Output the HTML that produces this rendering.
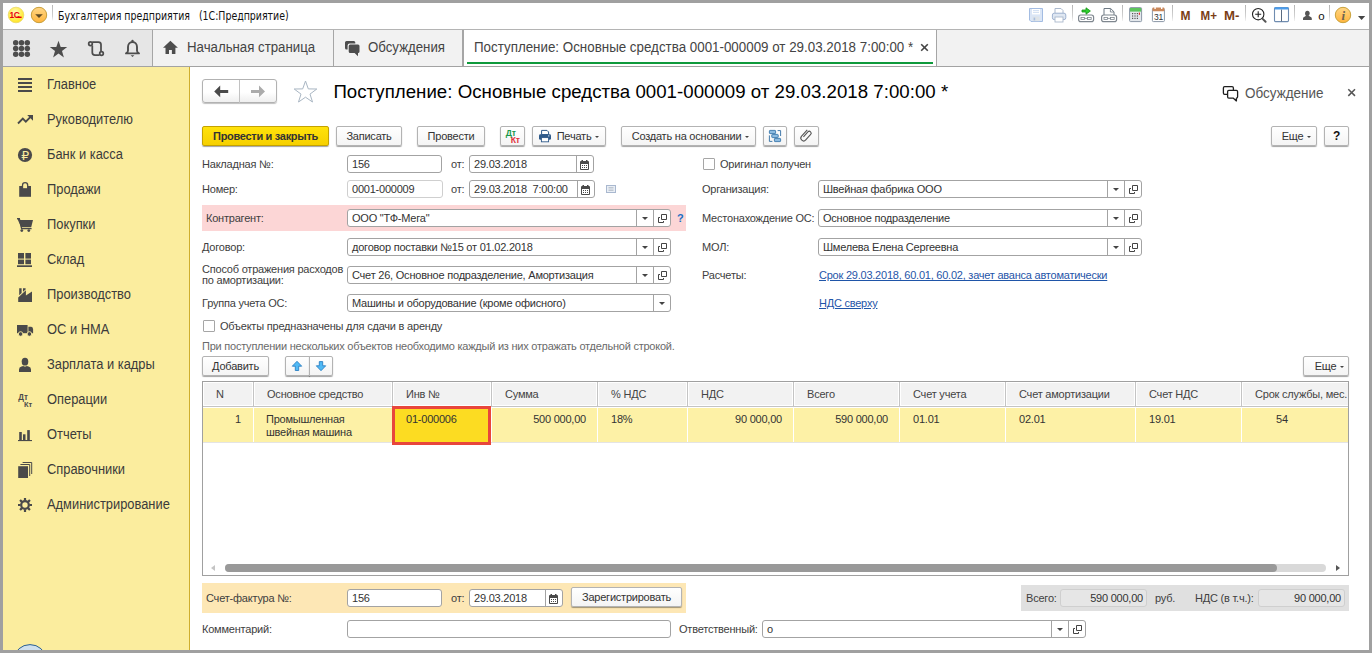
<!DOCTYPE html>
<html lang="ru">
<head>
<meta charset="utf-8">
<title>Бухгалтерия предприятия (1С:Предприятие)</title>
<style>
*{box-sizing:border-box;margin:0;padding:0}
html,body{width:1372px;height:653px;overflow:hidden;background:#a0a0a0}
body{position:relative;font-family:"Liberation Sans",sans-serif;font-size:11px;color:#333}
.a{position:absolute;white-space:pre}
svg{position:absolute;overflow:visible}
#win{left:3px;top:3px;width:1366px;height:647px;background:#fff;overflow:hidden}
#pg{left:-3px;top:-3px;width:1372px;height:653px}
/* title bar */
#ttl{left:58.4px;top:8px;height:16px;line-height:16px;font-family:"DejaVu Sans Condensed","DejaVu Sans",sans-serif;font-size:12px;color:#111;transform:scaleX(.872);transform-origin:0 50%}
.tsep{width:1px;top:5px;height:16px;background:linear-gradient(#b8b8b8,#d0d0d0 70%,#fff)}
.mtx{top:7px;height:16px;line-height:16px;font-size:13px;font-weight:bold;color:#7a3b12;letter-spacing:-0.5px}
/* tab bar */
#tabbar{left:3px;top:29px;width:1366px;height:38px;background:#f2f2f2;border-top:1px solid #b4b4b4;border-bottom:1px solid #a3a3a3}
#tools{left:3px;top:30px;width:149px;height:36px;background:#e6e6e6}
.tdiv{top:30px;height:36px;background:#a6a6a6}
.tabtx{top:30px;height:36px;line-height:35px;font-size:14px;color:#444;transform:scaleX(.946);transform-origin:0 50%}
#acttab{left:464px;top:30px;width:472px;height:36px;background:#fff}
#green{left:467px;top:62px;width:466px;height:2px;background:#0f9a3c}
/* sidebar */
#side{left:3px;top:67px;width:187px;height:583px;background:#fbed9e;border-right:1px solid #cfae2e}
.sit{left:47px;height:35px;line-height:35px;font-size:14px;color:#3b3b3b;transform:scaleX(.92);transform-origin:0 50%}
/* main */
#h1{left:333.4px;top:80px;height:24px;line-height:24px;font-size:18.67px;color:#000;letter-spacing:0.02px}
.btn{height:20px;border:1px solid #b3b3b3;border-radius:2px;background:linear-gradient(#fff,#f4f4f4);box-shadow:0 1px 1px rgba(0,0,0,.36);line-height:18px;text-align:center;font-size:11px;letter-spacing:-0.22px;color:#333}
.btn.y{background:linear-gradient(#ffe20a,#f6d000);border-color:#c4a200;font-weight:bold;letter-spacing:-0.3px}
.ar{display:inline-block;width:0;height:0;border-left:2.7px solid transparent;border-right:2.7px solid transparent;border-top:2.7px solid #444;margin-left:3.6px;vertical-align:middle;position:relative;top:0px}
.lb{height:18px;line-height:18px;font-size:11px;letter-spacing:-0.21px;color:#404040}
.inp{height:18px;border:1px solid #a3a3a3;border-radius:3px;background:#fff;line-height:16px;padding-left:4px;font-size:11px;letter-spacing:-0.22px;color:#333;overflow:hidden}
.inp.ro{border-color:#cfcfcf}
.seg{top:0;height:16px;width:1px;background:#a3a3a3}
.ddw{width:0;height:0;border-left:3px solid transparent;border-right:3px solid transparent;border-top:3px solid #444}
.cb{width:12px;height:12px;border:1px solid #a6a6a6;border-radius:1px;background:#fff}
.lnk{color:#1f55a8;text-decoration:underline;height:18px;line-height:18px;font-size:11px;letter-spacing:-0.23px}
.gray{color:#6a6a6a}
/* table */
#tbl{left:202px;top:381px;width:1147px;height:195px;border:1px solid #a0a0a0;background:#fff}
.th{top:383px;height:22px;background:#f2f2f2;line-height:23px;font-size:11px;letter-spacing:-0.21px;overflow:hidden;color:#444}
.td{top:408px;height:34px;background:#fdf1a6;line-height:13px;padding-top:5px;font-size:11px;letter-spacing:-0.22px;color:#333}
</style>
</head>
<body>
<div id="win" class="a"><div id="pg" class="a">
<div id="ttl" class="a">Бухгалтерия предприятия   (1С:Предприятие)</div>
<div class="a tsep" style="left:52px"></div>
<svg style="left:0;top:0" width="1372" height="653" viewBox="0 0 1372 653" font-family="Liberation Sans, sans-serif">
 <defs>
  <radialGradient id="g1c" cx="0.45" cy="0.35" r="0.7"><stop offset="0" stop-color="#fffbc0"/><stop offset="0.6" stop-color="#ffee50"/><stop offset="1" stop-color="#ffe11a"/></radialGradient>
  <linearGradient id="gsep" x1="0" y1="0" x2="0" y2="1"><stop offset="0" stop-color="#b4b4b4"/><stop offset="0.7" stop-color="#d2d2d2"/><stop offset="1" stop-color="#f4f4f4"/></linearGradient>
  <linearGradient id="gor" x1="0" y1="0" x2="0" y2="1"><stop offset="0" stop-color="#ffd686"/><stop offset="1" stop-color="#ffb53c"/></linearGradient>
 </defs>
 <!-- 1C logo -->
 <circle cx="16" cy="15" r="7.8" fill="url(#g1c)" stroke="#ead867" stroke-width="0.8"/>
 <text x="9.6" y="18" font-size="8.4" font-weight="bold" fill="#e8000c" letter-spacing="-0.6">1С</text>
 <rect x="16.4" y="16.6" width="5.2" height="1.4" fill="#e8000c"/>
 <!-- menu button -->
 <circle cx="39" cy="15" r="7.7" fill="url(#gor)" stroke="#c79e3a" stroke-width="1"/>
 <path d="M35.2 14.3 H42.8 L39 18 Z" fill="#5e4a24"/>
 <!-- separators -->
 <g fill="url(#gsep)">
  <rect x="1072" y="5" width="1" height="16"/>
  <rect x="1122" y="5" width="1" height="16"/>
  <rect x="1172" y="5" width="1" height="16"/>
  <rect x="1245" y="5" width="1" height="16"/>
  <rect x="1294" y="5" width="1" height="16"/>
  <rect x="1329" y="5" width="1" height="16"/>
 </g>
 <!-- save (disabled) -->
 <path d="M1029.5 8.5 H1042.5 V21.5 H1031 L1029.5 20 Z" fill="#dbe6f6" stroke="#a3bce2" stroke-width="1"/>
 <rect x="1032" y="9" width="8" height="5.4" fill="#fff"/>
 <path d="M1033 10.6 H1039 M1033 12.4 H1039" stroke="#c4d6ee" stroke-width="0.8"/>
 <rect x="1032.6" y="16.6" width="7" height="4.6" fill="#dfe4e8"/><rect x="1033.6" y="17.6" width="1.6" height="2.8" fill="#a8bfe0"/>
 <!-- print (disabled) -->
 <path d="M1055 8.5 H1061 L1063 10.5 V14 H1055 Z" fill="#fff" stroke="#aab8cc" stroke-width="1"/>
 <rect x="1052.4" y="13.2" width="13.4" height="6.4" rx="1.8" fill="#dfe7f2" stroke="#9fb2d0" stroke-width="1"/>
 <rect x="1055" y="17" width="8" height="5" fill="#fff" stroke="#aab8cc" stroke-width="0.9"/>
 <!-- link with green arrow -->
 <rect x="1078.6" y="15" width="15" height="6.6" rx="2.2" fill="#fff" stroke="#7f878f" stroke-width="1.2"/>
 <rect x="1081" y="17.4" width="3.6" height="2" fill="none" stroke="#7f878f" stroke-width="0.8"/><rect x="1087.6" y="17.4" width="3.6" height="2" fill="none" stroke="#7f878f" stroke-width="0.8"/>
 <path d="M1084.6 18.4 H1087.6" stroke="#7f878f" stroke-width="0.8"/>
 <path d="M1082 10 H1086 V7.8 L1090.4 11 L1086 14.2 V12 H1082 Z" fill="#2fd02f" stroke="#129212" stroke-width="0.8"/>
 <!-- doc over link -->
 <path d="M1104 8.5 H1110.6 L1114 11.8 V16 H1104 Z" fill="#fff" stroke="#6d7883" stroke-width="1"/>
 <path d="M1110.4 8.6 V12 H1113.8" fill="none" stroke="#6d7883" stroke-width="0.8"/>
 <rect x="1101.6" y="15" width="15" height="6.6" rx="2.2" fill="#fff" stroke="#7f878f" stroke-width="1.2"/>
 <rect x="1104" y="17.4" width="3.6" height="2" fill="none" stroke="#7f878f" stroke-width="0.8"/><rect x="1110.6" y="17.4" width="3.6" height="2" fill="none" stroke="#7f878f" stroke-width="0.8"/>
 <path d="M1107.6 18.4 H1110.6" stroke="#7f878f" stroke-width="0.8"/>
 <!-- calculator -->
 <rect x="1129.6" y="7.6" width="12" height="14" rx="1" fill="#e4e8ec" stroke="#8a97a6" stroke-width="1"/>
 <rect x="1130" y="8" width="11.2" height="3.6" fill="#5cc45c"/>
 <g fill="#555"><rect x="1132" y="13" width="1.2" height="1.2"/><rect x="1134.4" y="13" width="1.2" height="1.2"/><rect x="1136.8" y="13" width="1.2" height="1.2"/>
 <rect x="1132" y="15.4" width="1.2" height="1.2"/><rect x="1134.4" y="15.4" width="1.2" height="1.2"/><rect x="1136.8" y="15.4" width="1.2" height="1.2"/>
 <rect x="1132" y="17.8" width="1.2" height="1.2"/><rect x="1134.4" y="17.8" width="1.2" height="1.2"/><rect x="1136.8" y="17.8" width="1.2" height="1.2"/></g>
 <rect x="1138.8" y="12.6" width="1.2" height="2.2" fill="#e03030"/>
 <!-- calendar -->
 <rect x="1152.4" y="8.6" width="12" height="13" rx="1" fill="#fff" stroke="#8a97a6" stroke-width="1"/>
 <rect x="1152.4" y="7.6" width="12" height="3.6" rx="1" fill="#c9875a"/>
 <rect x="1154.4" y="6.6" width="1.4" height="2.4" fill="#fff"/><rect x="1161" y="6.6" width="1.4" height="2.4" fill="#fff"/>
 <text x="1158.4" y="19.8" font-size="8.5" fill="#333" text-anchor="middle" letter-spacing="-0.4">31</text>
 <!-- M M+ M- -->
 <g font-size="13" font-weight="bold" fill="#7a3d14">
  <text x="1180.6" y="20" textLength="10" lengthAdjust="spacingAndGlyphs">M</text>
  <text x="1200.6" y="20" textLength="16.4" lengthAdjust="spacingAndGlyphs">M+</text>
  <text x="1224" y="20" textLength="15.4" lengthAdjust="spacingAndGlyphs">M-</text>
 </g>
 <!-- zoom -->
 <circle cx="1258.2" cy="14.2" r="5.7" fill="#fff" stroke="#222" stroke-width="1.1"/>
 <path d="M1255.2 14.2 H1261.2 M1258.2 11.2 V17.2" stroke="#222" stroke-width="1.1"/>
 <path d="M1262.4 18.6 L1265.6 21.8" stroke="#555" stroke-width="2" stroke-linecap="round"/>
 <!-- panels -->
 <rect x="1274.5" y="7.6" width="14" height="14" rx="1" fill="#fff" stroke="#6f8cb0" stroke-width="1.1"/>
 <rect x="1274.5" y="7.2" width="14" height="2.4" rx="0.8" fill="#4a9cec"/>
 <path d="M1281.5 9.6 V21.4" stroke="#5a6b80" stroke-width="1"/>
 <!-- user -->
 <ellipse cx="1307.4" cy="13.4" rx="2.3" ry="2.6" fill="#555"/>
 <path d="M1303 20 V18.6 Q1303 17 1305 16.6 L1306.2 15.6 H1308.6 L1309.8 16.6 Q1311.8 17 1311.8 18.6 V20 Z" fill="#555"/>
 <text x="1318.2" y="20" font-size="11.5" fill="#111">о</text>
 <!-- info -->
 <circle cx="1343" cy="15" r="7.7" fill="url(#gor)" stroke="#c9a23c" stroke-width="1"/>
 <text x="1343.2" y="19.6" font-family="Liberation Serif, serif" font-size="13" font-weight="bold" font-style="italic" fill="#6e6350" text-anchor="middle">i</text>
 <path d="M1358 16 H1365.2 L1361.6 20 Z" fill="#444"/>
</svg>

<div id="tabbar" class="a"></div><div id="tools" class="a"></div>
<div class="a tdiv" style="left:152px;width:1px"></div>
<div class="a tabtx" style="left:187px">Начальная страница</div>
<div class="a tdiv" style="left:333px;width:1px"></div>
<div class="a tabtx" style="left:368px">Обсуждения</div>
<div class="a tdiv" style="left:462px;width:2px"></div>
<div id="acttab" class="a"></div>
<div class="a tabtx" style="left:473.6px;transform:scaleX(.954)">Поступление: Основные средства 0001-000009 от 29.03.2018 7:00:00 *</div>
<div id="green" class="a"></div>
<div class="a tdiv" style="left:936px;width:1px"></div>
<svg style="left:0;top:0" width="1372" height="653" viewBox="0 0 1372 653" font-family="Liberation Sans, sans-serif">
<g fill="#4d4d4d">
 <!-- grid of dots -->
 <circle cx="15.7" cy="42.7" r="2.75"/><circle cx="21.5" cy="42.7" r="2.75"/><circle cx="27.3" cy="42.7" r="2.75"/>
 <circle cx="15.7" cy="48.5" r="2.75"/><circle cx="21.5" cy="48.5" r="2.75"/><circle cx="27.3" cy="48.5" r="2.75"/>
 <circle cx="15.7" cy="54.3" r="2.75"/><circle cx="21.5" cy="54.3" r="2.75"/><circle cx="27.3" cy="54.3" r="2.75"/>
 <!-- star -->
 <path d="M58.5 40.8 L60.7 47 L67.2 47.1 L62 51.1 L63.9 57.4 L58.5 53.6 L53.1 57.4 L55 51.1 L49.8 47.1 L56.3 47 Z"/>
 <!-- home -->
 <path d="M170.4 40.8 L177.9 47.8 H175.4 V54 H171.9 V50 H169 V54 H165.5 V47.8 H163 Z"/>
 <!-- discussions (filled bubbles) -->
 <path d="M346.5 41 H353.8 Q355.3 41 355.3 42.5 V43.4 H349.6 Q347.6 43.4 347.6 45.4 V49.4 H346.5 Q345 49.4 345 47.9 V42.5 Q345 41 346.5 41 Z"/>
 <path d="M350.2 44.6 H358 Q359.5 44.6 359.5 46.1 V51.6 Q359.5 53.1 358 53.1 V56.2 L354.6 53.1 H350.2 Q348.7 53.1 348.7 51.6 V46.1 Q348.7 44.6 350.2 44.6 Z"/>
</g>
<g fill="none" stroke="#4d4d4d" stroke-width="1.75">
 <!-- history scroll -->
 <path d="M92.2 42 H98.4 Q101 42 101 44.6 V51.6"/>
 <path d="M92.3 45.6 V52.6 Q92.3 55.2 94.9 55.2 H99.6"/>
 <circle cx="90.5" cy="43.7" r="1.8"/><circle cx="101.5" cy="53.5" r="1.8"/>
 <!-- bell -->
 <path d="M126 53.4 Q128 52.6 128 50.4 V47 a4.5 5 0 0 1 9 0 V50.4 Q137 52.6 139 53.4 Z" stroke-width="1.9" stroke-linejoin="round"/>
</g>
<path d="M130.6 55.2 H134.4 L132.5 57.1 Z" fill="#4d4d4d"/>
<circle cx="132.5" cy="41" r="1.2" fill="#4d4d4d"/>
<!-- tab close -->
<path d="M921.2 44.2 L927.8 50.8 M927.8 44.2 L921.2 50.8" stroke="#444" stroke-width="1.6" fill="none"/>
</svg>

<div id="side" class="a"></div>
<div class="a sit" style="top:67px">Главное</div>
<div class="a sit" style="top:102px">Руководителю</div>
<div class="a sit" style="top:137px">Банк и касса</div>
<div class="a sit" style="top:172px">Продажи</div>
<div class="a sit" style="top:207px">Покупки</div>
<div class="a sit" style="top:242px">Склад</div>
<div class="a sit" style="top:277px">Производство</div>
<div class="a sit" style="top:312px">ОС и НМА</div>
<div class="a sit" style="top:347px">Зарплата и кадры</div>
<div class="a sit" style="top:382px">Операции</div>
<div class="a sit" style="top:417px">Отчеты</div>
<div class="a sit" style="top:452px">Справочники</div>
<div class="a sit" style="top:487px">Администрирование</div>
<svg style="left:0;top:0" width="1372" height="653" viewBox="0 0 1372 653" font-family="Liberation Sans, sans-serif">
<!-- ===== sidebar icons ===== -->
<g fill="#4a4a4a" stroke="none">
 <!-- Главное -->
 <rect x="18" y="78" width="14" height="2"/><rect x="18" y="82" width="14" height="2"/><rect x="18" y="86" width="14" height="2"/><rect x="18" y="90" width="14" height="2"/>
 <!-- Руководителю -->
 <path d="M18 123.5 L22.8 118.7 L25.8 121.7 L30.3 117.2" fill="none" stroke="#4a4a4a" stroke-width="1.9" stroke-linejoin="miter"/>
 <path d="M27.2 115 H33 V120.8 Z"/>
 <!-- Банк и касса -->
 <circle cx="25" cy="155" r="7.1"/>
 <!-- Продажи -->
 <path d="M19.2 186 H31 V196.8 H19.2 Z"/>
 <path d="M22.5 188.8 V185.2 a2.6 2.6 0 0 1 5.2 0 V188.8 Z" fill="#fbed9e" stroke="#4a4a4a" stroke-width="1.3"/>
 <!-- Покупки -->
 <path d="M17 218 H19.6 L20.2 220 H33 L31.2 227.2 H21.2 Z"/>
 <path d="M17 218.7 H19.3 L21.6 228.6 H31.6" fill="none" stroke="#4a4a4a" stroke-width="1.3"/>
 <circle cx="21.8" cy="230.6" r="1.4"/><circle cx="28.8" cy="230.6" r="1.4"/>
 <!-- Склад -->
 <rect x="18" y="253" width="6" height="5.6"/><rect x="25.4" y="253" width="5.6" height="5.6"/>
 <rect x="18" y="259.6" width="6" height="4.6"/><rect x="25.4" y="259.6" width="5.6" height="4.6"/>
 <rect x="17" y="265.3" width="15" height="1.7"/>
 <!-- Производство -->
 <path d="M18.2 302 V297.4 L25.9 290.2 V295.4 L32 291.6 V302 Z"/>
 <path d="M19.2 288.2 H21.6 V293 L19.2 295.2 Z"/><path d="M23 288.2 H25.6 V289.4 L23 291.8 Z"/>
 <!-- ОС и НМА -->
 <path d="M17 325 H27.6 V333.2 H17 Z"/>
 <path d="M28.4 326.8 H31.2 Q33.1 327.2 33.1 329.4 V333.2 H28.4 Z"/>
 <circle cx="20.6" cy="334" r="2.3" stroke="#fbed9e" stroke-width="0.9"/><circle cx="29.4" cy="334" r="2.3" stroke="#fbed9e" stroke-width="0.9"/>
 <!-- Зарплата и кадры -->
 <ellipse cx="25" cy="361.7" rx="3.3" ry="3.9"/>
 <path d="M19 372 V369.5 Q19 367.3 21.5 366.6 L23.2 366 Q25 367.2 26.8 366 L28.5 366.6 Q31 367.3 31 369.5 V372 Z"/>
 <!-- Отчеты -->
 <rect x="19.2" y="432" width="2.6" height="8.5"/><rect x="23" y="434.3" width="2.5" height="6.2"/><rect x="27.2" y="430.1" width="2.6" height="10.4"/>
 <rect x="18" y="440" width="14" height="1.1"/>
 <!-- Справочники -->
 <rect x="18.2" y="466.2" width="9.8" height="11.8"/>
 <path d="M20.4 464.5 H29.7 V476" fill="none" stroke="#4a4a4a" stroke-width="1"/>
 <path d="M22.6 462.5 H31.7 V474" fill="none" stroke="#4a4a4a" stroke-width="1"/>
 <!-- Администрирование -->
 <circle cx="25" cy="505" r="3.8" fill="none" stroke="#4a4a4a" stroke-width="2.2"/>
 <g stroke="#4a4a4a" stroke-width="2.2">
  <path d="M25 498 V500.6 M25 509.4 V512 M18 505 H20.6 M29.4 505 H32"/>
  <path d="M20.05 500.05 L21.9 501.9 M28.1 508.1 L29.95 509.95 M29.95 500.05 L28.1 501.9 M21.9 508.1 L20.05 509.95"/>
 </g>
</g>
<text x="25.2" y="159.8" font-family="DejaVu Sans, sans-serif" font-size="12.5" fill="#fbed9e" text-anchor="middle">₽</text>
<text x="18.2" y="400" font-size="8.8" font-weight="bold" fill="#4a4a4a" textLength="9.6" lengthAdjust="spacingAndGlyphs">Дт</text>
<text x="24" y="407" font-size="7.6" font-weight="bold" fill="#4a4a4a" textLength="8.2" lengthAdjust="spacingAndGlyphs">Кт</text>
<!-- windows start orb peeking -->
<ellipse cx="30" cy="658.6" rx="15.5" ry="14" fill="#cfe0ee" stroke="#2a5f8f" stroke-width="1"/>
</svg>

<div id="h1" class="a">Поступление: Основные средства 0001-000009 от 29.03.2018 7:00:00 *</div>
<div class="a lb" style="left:1245px;top:84px;font-size:14px;color:#555;letter-spacing:0;transform:scaleX(.962);transform-origin:0 50%">Обсуждение</div>
<div class="a btn y" style="left:202px;top:126px;width:127px;">Провести и закрыть</div>
<div class="a btn " style="left:336px;top:126px;width:66px;">Записать</div>
<div class="a btn " style="left:417px;top:126px;width:68px;">Провести</div>
<div class="a btn " style="left:500px;top:126px;width:25px;"></div>
<div class="a btn " style="left:532px;top:126px;width:74px;text-align:right;padding-right:6px">Печать<span class="ar"></span></div>
<div class="a btn " style="left:621px;top:126px;width:135px;text-align:right;padding-right:6px">Создать на основании<span class="ar"></span></div>
<div class="a btn " style="left:763px;top:126px;width:24px;"></div>
<div class="a btn " style="left:794px;top:126px;width:25px;"></div>
<div class="a btn " style="left:1271px;top:126px;width:46px;text-align:right;padding-right:5px">Еще<span class="ar"></span></div>
<div class="a btn " style="left:1324px;top:126px;width:25px;font-weight:bold;font-size:12px;color:#111">?</div>
<div class="a lb" style="left:202px;top:155px;">Накладная №:</div>
<div class="a inp" style="left:347px;top:155px;width:95px;">156</div>
<div class="a lb" style="left:451px;top:155px;">от:</div>
<div class="a inp" style="left:469px;top:155px;width:125px;">29.03.2018<div class="a seg" style="left:106px"></div><svg style="left:110px;top:4px" width="9" height="10" viewBox="0 0 9 10"><rect x="0" y="1" width="9" height="9" rx="1" fill="#4a4a4a"/><rect x="1" y="4" width="7" height="5" fill="#fff"/><rect x="1.5" y="0" width="1.5" height="2" fill="#4a4a4a"/><rect x="6" y="0" width="1.5" height="2" fill="#4a4a4a"/><g fill="#4a4a4a"><rect x="2" y="5" width="1" height="1"/><rect x="4" y="5" width="1" height="1"/><rect x="6" y="5" width="1" height="1"/><rect x="2" y="7" width="1" height="1"/><rect x="4" y="7" width="1" height="1"/><rect x="6" y="7" width="1" height="1"/></g></svg></div>
<div class="a lb" style="left:202px;top:180px;">Номер:</div>
<div class="a inp ro" style="left:347px;top:180px;width:96px;">0001-000009</div>
<div class="a lb" style="left:451px;top:180px;">от:</div>
<div class="a inp" style="left:469px;top:180px;width:126px;">29.03.2018  7:00:00<div class="a seg" style="left:107px"></div><svg style="left:111px;top:4px" width="9" height="10" viewBox="0 0 9 10"><rect x="0" y="1" width="9" height="9" rx="1" fill="#4a4a4a"/><rect x="1" y="4" width="7" height="5" fill="#fff"/><rect x="1.5" y="0" width="1.5" height="2" fill="#4a4a4a"/><rect x="6" y="0" width="1.5" height="2" fill="#4a4a4a"/><g fill="#4a4a4a"><rect x="2" y="5" width="1" height="1"/><rect x="4" y="5" width="1" height="1"/><rect x="6" y="5" width="1" height="1"/><rect x="2" y="7" width="1" height="1"/><rect x="4" y="7" width="1" height="1"/><rect x="6" y="7" width="1" height="1"/></g></svg></div>
<div class="a" style="left:202px;top:205px;width:484px;height:26px;background:#fcd6d6"></div>
<div class="a lb" style="left:206px;top:209px;">Контрагент:</div>
<div class="a inp" style="left:347px;top:209px;width:324px;">ООО "ТФ-Мега"<div class="a seg" style="left:305px"></div><svg style="left:310px;top:4px" width="9" height="9" viewBox="0 0 9 9"><path d="M3.5 0.5h5v5h-5z" fill="#fff" stroke="#444" stroke-width="1"/><path d="M2 3.5H0.5v5h5V7" fill="none" stroke="#444" stroke-width="1"/></svg><div class="a seg" style="left:288px"></div><div class="a ddw" style="left:294px;top:7px"></div></div>
<div class="a lb" style="left:677px;top:209px;font-weight:bold;color:#1a6fc4;letter-spacing:0">?</div>
<div class="a lb" style="left:202px;top:238px;">Договор:</div>
<div class="a inp" style="left:347px;top:238px;width:324px;">договор поставки №15 от 01.02.2018<div class="a seg" style="left:305px"></div><svg style="left:310px;top:4px" width="9" height="9" viewBox="0 0 9 9"><path d="M3.5 0.5h5v5h-5z" fill="#fff" stroke="#444" stroke-width="1"/><path d="M2 3.5H0.5v5h5V7" fill="none" stroke="#444" stroke-width="1"/></svg><div class="a seg" style="left:288px"></div><div class="a ddw" style="left:294px;top:7px"></div></div>
<div class="a lb" style="left:202px;top:262px;height:28px;line-height:11px;top:264px">Способ отражения расходов
по амортизации:</div>
<div class="a inp" style="left:347px;top:266px;width:324px;">Счет 26, Основное подразделение, Амортизация<div class="a seg" style="left:305px"></div><svg style="left:310px;top:4px" width="9" height="9" viewBox="0 0 9 9"><path d="M3.5 0.5h5v5h-5z" fill="#fff" stroke="#444" stroke-width="1"/><path d="M2 3.5H0.5v5h5V7" fill="none" stroke="#444" stroke-width="1"/></svg><div class="a seg" style="left:288px"></div><div class="a ddw" style="left:294px;top:7px"></div></div>
<div class="a lb" style="left:202px;top:294px;">Группа учета ОС:</div>
<div class="a inp" style="left:347px;top:294px;width:324px;">Машины и оборудование (кроме офисного)<div class="a seg" style="left:305px"></div><div class="a ddw" style="left:311px;top:7px"></div></div>
<div class="a cb" style="left:203px;top:320px"></div>
<div class="a lb" style="left:220px;top:317px;">Объекты предназначены для сдачи в аренду</div>
<div class="a lb gray" style="left:202px;top:337px;letter-spacing:-0.23px">При поступлении нескольких объектов необходимо каждый из них отражать отдельной строкой.</div>
<div class="a cb" style="left:703px;top:158px"></div>
<div class="a lb" style="left:720px;top:155px;">Оригинал получен</div>
<div class="a lb" style="left:702px;top:180px;">Организация:</div>
<div class="a inp" style="left:818px;top:180px;width:324px;">Швейная фабрика ООО<div class="a seg" style="left:305px"></div><svg style="left:310px;top:4px" width="9" height="9" viewBox="0 0 9 9"><path d="M3.5 0.5h5v5h-5z" fill="#fff" stroke="#444" stroke-width="1"/><path d="M2 3.5H0.5v5h5V7" fill="none" stroke="#444" stroke-width="1"/></svg><div class="a seg" style="left:288px"></div><div class="a ddw" style="left:294px;top:7px"></div></div>
<div class="a lb" style="left:702px;top:209px;">Местонахождение ОС:</div>
<div class="a inp" style="left:818px;top:209px;width:324px;">Основное подразделение<div class="a seg" style="left:305px"></div><svg style="left:310px;top:4px" width="9" height="9" viewBox="0 0 9 9"><path d="M3.5 0.5h5v5h-5z" fill="#fff" stroke="#444" stroke-width="1"/><path d="M2 3.5H0.5v5h5V7" fill="none" stroke="#444" stroke-width="1"/></svg><div class="a seg" style="left:288px"></div><div class="a ddw" style="left:294px;top:7px"></div></div>
<div class="a lb" style="left:702px;top:238px;">МОЛ:</div>
<div class="a inp" style="left:818px;top:238px;width:324px;">Шмелева Елена Сергеевна<div class="a seg" style="left:305px"></div><svg style="left:310px;top:4px" width="9" height="9" viewBox="0 0 9 9"><path d="M3.5 0.5h5v5h-5z" fill="#fff" stroke="#444" stroke-width="1"/><path d="M2 3.5H0.5v5h5V7" fill="none" stroke="#444" stroke-width="1"/></svg><div class="a seg" style="left:288px"></div><div class="a ddw" style="left:294px;top:7px"></div></div>
<div class="a lb" style="left:702px;top:266px;">Расчеты:</div>
<div class="a lnk" style="left:819px;top:266px;">Срок 29.03.2018, 60.01, 60.02, зачет аванса автоматически</div>
<div class="a lnk" style="left:819px;top:294px;">НДС сверху</div>
<div class="a btn " style="left:202px;top:356px;width:67px;">Добавить</div>
<div class="a btn " style="left:285px;top:356px;width:25px;border-radius:2px 0 0 2px"></div>
<div class="a btn " style="left:309px;top:356px;width:24px;border-radius:0 2px 2px 0"></div>
<div class="a btn " style="left:1303px;top:356px;width:46px;text-align:right;padding-right:4px">Еще<span class="ar"></span></div>
<div id="tbl" class="a"></div>
<div class="a th" style="left:204px;width:48px;padding-left:12px">N</div>
<div class="a" style="left:253px;top:382px;width:1px;height:24px;background:#c4c4c4"></div>
<div class="a th" style="left:255px;width:136px;padding-left:12px">Основное средство</div>
<div class="a" style="left:392px;top:382px;width:1px;height:24px;background:#c4c4c4"></div>
<div class="a th" style="left:394px;width:96px;padding-left:12px">Инв №</div>
<div class="a" style="left:491px;top:382px;width:1px;height:24px;background:#c4c4c4"></div>
<div class="a th" style="left:493px;width:103px;padding-left:12px">Сумма</div>
<div class="a" style="left:597px;top:382px;width:1px;height:24px;background:#c4c4c4"></div>
<div class="a th" style="left:599px;width:87px;padding-left:12px">% НДС</div>
<div class="a" style="left:687px;top:382px;width:1px;height:24px;background:#c4c4c4"></div>
<div class="a th" style="left:689px;width:103px;padding-left:12px">НДС</div>
<div class="a" style="left:793px;top:382px;width:1px;height:24px;background:#c4c4c4"></div>
<div class="a th" style="left:795px;width:103px;padding-left:12px">Всего</div>
<div class="a" style="left:899px;top:382px;width:1px;height:24px;background:#c4c4c4"></div>
<div class="a th" style="left:901px;width:103px;padding-left:12px">Счет учета</div>
<div class="a" style="left:1005px;top:382px;width:1px;height:24px;background:#c4c4c4"></div>
<div class="a th" style="left:1007px;width:127px;padding-left:12px">Счет амортизации</div>
<div class="a" style="left:1135px;top:382px;width:1px;height:24px;background:#c4c4c4"></div>
<div class="a th" style="left:1137px;width:103px;padding-left:12px">Счет НДС</div>
<div class="a" style="left:1241px;top:382px;width:1px;height:24px;background:#c4c4c4"></div>
<div class="a th" style="left:1243px;width:105px;padding-left:12px">Срок службы, мес.</div>
<div class="a" style="left:203px;top:406px;width:1145px;height:1px;background:#c4c4c4"></div>
<div class="a td" style="left:203px;width:50px;text-align:right;padding-right:12px;">1</div>
<div class="a td" style="left:254px;width:138px;padding-left:12px;">Промышленная
швейная машина</div>
<div class="a td" style="left:393px;width:98px;padding-left:13px;">01-000006</div>
<div class="a td" style="left:492px;width:105px;text-align:right;padding-right:11px;">500 000,00</div>
<div class="a td" style="left:598px;width:89px;padding-left:13px;">18%</div>
<div class="a td" style="left:688px;width:105px;text-align:right;padding-right:11px;">90 000,00</div>
<div class="a td" style="left:794px;width:105px;text-align:right;padding-right:11px;">590 000,00</div>
<div class="a td" style="left:900px;width:105px;padding-left:13px;">01.01</div>
<div class="a td" style="left:1006px;width:129px;padding-left:13px;">02.01</div>
<div class="a td" style="left:1136px;width:105px;padding-left:13px;">19.01</div>
<div class="a td" style="left:1242px;width:106px;padding-left:34px;">54</div>
<div class="a" style="left:203px;top:442px;width:1145px;height:1px;background:#e4e4e4"></div>
<div class="a" style="left:392px;top:406px;width:99px;height:39px;background:#fcdc22;border:3px solid #e8463c;font-size:11px;letter-spacing:-0.22px;line-height:13px;padding:4px 0 0 11px;color:#333">01-000006</div>
<div class="a" style="left:225px;top:564px;width:1101px;height:8px;border-radius:4px;background:#d9d9d9"></div>
<div class="a" style="left:225px;top:564px;width:1052px;height:8px;border-radius:4px;background:#999"></div>
<div class="a" style="left:211px;top:565px;width:0;height:0;border-top:3px solid transparent;border-bottom:3px solid transparent;border-right:4px solid #c4c4c4"></div>
<div class="a" style="left:1336px;top:565px;width:0;height:0;border-top:3px solid transparent;border-bottom:3px solid transparent;border-left:4px solid #555"></div>
<div class="a" style="left:202px;top:583px;width:484px;height:30px;background:#fde7b5"></div>
<div class="a lb" style="left:206px;top:589px;">Счет-фактура №:</div>
<div class="a inp" style="left:347px;top:589px;width:95px;">156</div>
<div class="a lb" style="left:451px;top:589px;">от:</div>
<div class="a inp" style="left:469px;top:589px;width:94px;">29.03.2018<div class="a seg" style="left:75px"></div><svg style="left:79px;top:4px" width="9" height="10" viewBox="0 0 9 10"><rect x="0" y="1" width="9" height="9" rx="1" fill="#4a4a4a"/><rect x="1" y="4" width="7" height="5" fill="#fff"/><rect x="1.5" y="0" width="1.5" height="2" fill="#4a4a4a"/><rect x="6" y="0" width="1.5" height="2" fill="#4a4a4a"/><g fill="#4a4a4a"><rect x="2" y="5" width="1" height="1"/><rect x="4" y="5" width="1" height="1"/><rect x="6" y="5" width="1" height="1"/><rect x="2" y="7" width="1" height="1"/><rect x="4" y="7" width="1" height="1"/><rect x="6" y="7" width="1" height="1"/></g></svg></div>
<div class="a btn " style="left:571px;top:587px;width:111px;">Зарегистрировать</div>
<div class="a" style="left:1021px;top:585px;width:328px;height:26px;background:#e0e0e0"></div>
<div class="a lb" style="left:1026px;top:589px;">Всего:</div>
<div class="a inp" style="left:1060px;top:589px;width:87px;background:#e6e6e6;border-color:#cfcfcf;text-align:right;padding-right:3px;">590 000,00</div>
<div class="a lb" style="left:1155px;top:589px;">руб.</div>
<div class="a lb" style="left:1195px;top:589px;">НДС (в т.ч.):</div>
<div class="a inp" style="left:1258px;top:589px;width:87px;background:#e6e6e6;border-color:#cfcfcf;text-align:right;padding-right:3px;">90 000,00</div>
<div class="a lb" style="left:202px;top:620px;">Комментарий:</div>
<div class="a inp" style="left:347px;top:620px;width:324px;"></div>
<div class="a lb" style="left:679px;top:620px;">Ответственный:</div>
<div class="a inp" style="left:762px;top:620px;width:324px;">о<div class="a seg" style="left:305px"></div><svg style="left:310px;top:4px" width="9" height="9" viewBox="0 0 9 9"><path d="M3.5 0.5h5v5h-5z" fill="#fff" stroke="#444" stroke-width="1"/><path d="M2 3.5H0.5v5h5V7" fill="none" stroke="#444" stroke-width="1"/></svg><div class="a seg" style="left:288px"></div><div class="a ddw" style="left:294px;top:7px"></div></div>
<div class="a" style="left:202px;top:79px;width:75px;height:24px;border:1px solid #b2b2b2;border-radius:3px;background:linear-gradient(#fff 55%,#efefef);box-shadow:0 1px 1px rgba(0,0,0,.25)"></div>
<div class="a" style="left:239px;top:80px;width:1px;height:23px;background:#c2c2c2"></div>
<svg style="left:0;top:0" width="1372" height="653" viewBox="0 0 1372 653" font-family="Liberation Sans, sans-serif">
 <!-- back / forward -->
 <path d="M214.2 91.4 L220.2 85.6 V89.9 H228.2 V92.9 H220.2 V97.2 Z" fill="#4a4a4a"/>
 <path d="M265 91.4 L259 85.6 V89.9 H251 V92.9 H259 V97.2 Z" fill="#ababab"/>
 <!-- favourite star outline -->
 <path d="M305.5 81 L308.3 88.9 L316.8 89 L310 94.1 L312.5 102 L305.5 97.2 L298.5 102 L301 94.1 L294.2 89 L302.7 88.9 Z" fill="#fff" stroke="#a9b6c3" stroke-width="1"/>
 <!-- discussion icon -->
 <g fill="#fff" stroke="#1e1e1e" stroke-width="1.3" stroke-linejoin="round">
  <path d="M1224.6 86.6 H1232 Q1233.4 86.6 1233.4 88 V93 Q1233.4 94.4 1232 94.4 H1224.6 Q1223.4 94.4 1223.4 93 V88 Q1223.4 86.6 1224.6 86.6 Z"/>
  <path d="M1228.8 90.4 H1236.4 Q1237.6 90.4 1237.6 91.8 V96.8 Q1237.6 98.2 1236.4 98.2 V100.9 L1233.4 98.2 H1228.8 Q1227.6 98.2 1227.6 96.8 V91.8 Q1227.6 90.4 1228.8 90.4 Z"/>
 </g>
 <path d="M1348.3 89.2 L1355 95.9 M1355 89.2 L1348.3 95.9" stroke="#555" stroke-width="1.5" fill="none"/>
 <!-- DtKt button -->
 <text x="505.8" y="135.9" font-size="8.6" font-weight="bold" fill="#18984c" letter-spacing="-0.2">Дт</text>
 <text x="510.8" y="142.5" font-size="8.6" font-weight="bold" fill="#e0313b" letter-spacing="-0.2">Кт</text>
 <!-- printer -->
 <g>
  <path d="M541.6 130.4 H547 L548.6 132 V134.6 H541.6 Z" fill="#fff" stroke="#2f5a8a" stroke-width="1"/>
  <rect x="539" y="134.2" width="12" height="5.6" rx="1.4" fill="#2f5a8a"/>
  <rect x="541.4" y="137.6" width="7.2" height="4.2" fill="#fff" stroke="#2f5a8a" stroke-width="0.9"/>
  <rect x="548" y="135.4" width="1.4" height="1" fill="#cfe0f2"/>
 </g>
 <!-- structure icon -->
 <g fill="#8dbbe0" stroke="#3a78ad" stroke-width="0.9">
  <rect x="769.4" y="130.4" width="6.2" height="3.2" rx="0.6"/>
  <rect x="771.8" y="134.4" width="6.4" height="3.2" rx="0.6"/>
  <rect x="774.4" y="138.4" width="6.2" height="3.2" rx="0.6"/>
 </g>
 <path d="M777.6 130.6 H780.6 V136 M769.4 135.4 V141.4 H772.4" fill="none" stroke="#2f6da3" stroke-width="0.9"/>
 <!-- paperclip -->
 <g transform="rotate(42 806 135.5)" fill="none" stroke="#555" stroke-width="1.1">
  <path d="M803.2 130.5 V139 a2.8 2.8 0 0 0 5.6 0 V131.6 a1.9 1.9 0 0 0 -3.8 0 V138.2"/>
 </g>
 <!-- up / down arrows -->
 <path d="M297 361.3 L301.7 366.2 H298.7 V370.5 H295.3 V366.2 H292.3 Z" fill="#4fb9f5" stroke="#2b80c4" stroke-width="0.9"/>
 <path d="M321 370.7 L325.7 365.8 H322.7 V361.6 H319.3 V365.8 H316.3 Z" fill="#4fb9f5" stroke="#2b80c4" stroke-width="0.9"/>
 <!-- small list icon near date -->
 <rect x="606.5" y="185.5" width="9" height="7" fill="#e9eef5" stroke="#a9b8cf" stroke-width="1"/>
 <path d="M608.5 187.5 H613.5 M608.5 189 H613.5 M608.5 190.5 H613.5" stroke="#b4bcc8" stroke-width="0.8"/>
</svg>

</div></div>
</body>
</html>
